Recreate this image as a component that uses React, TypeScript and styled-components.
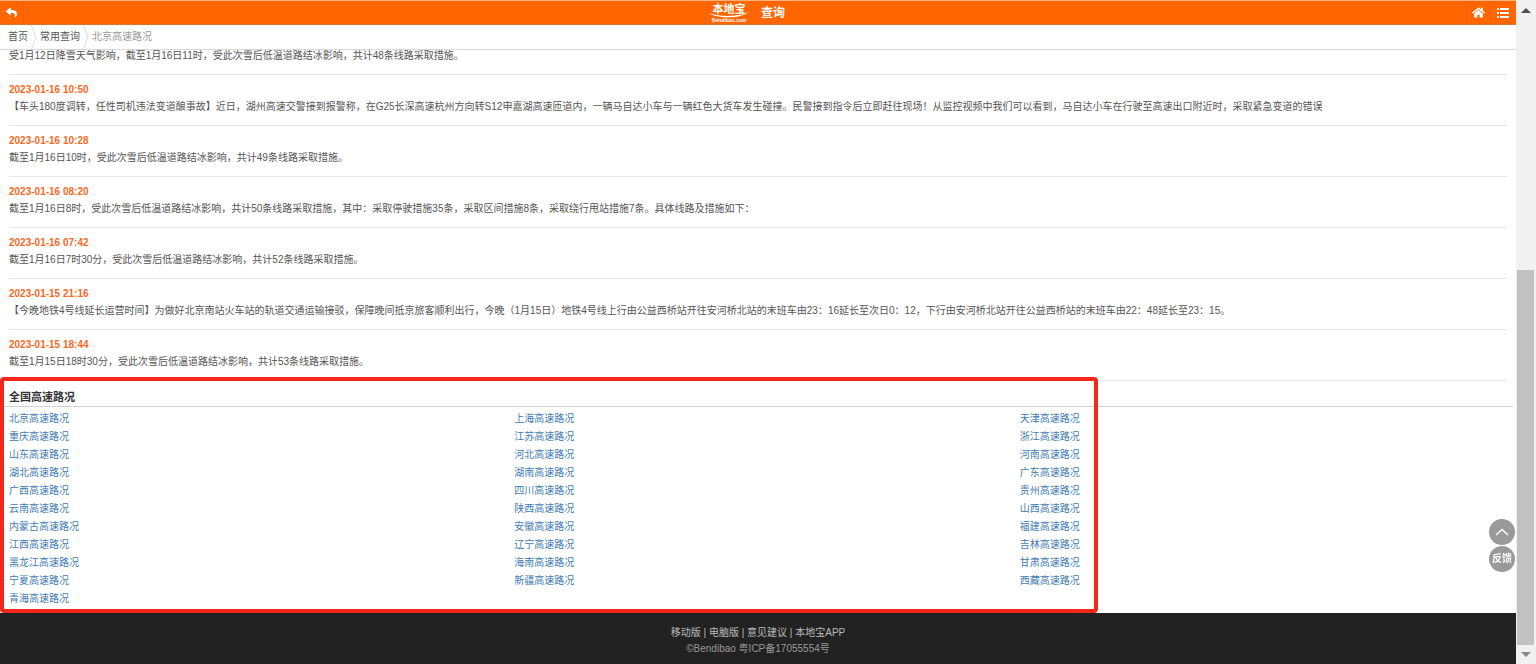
import React from "react";
import styled, { createGlobalStyle } from "styled-components";
import { FaReply, FaHome } from "react-icons/fa";

const GlobalStyle = createGlobalStyle`
  * { box-sizing: border-box; }
  body {
    margin: 0;
    background: #fff;
    color: #555;
    font: 10px/18px "Liberation Sans", "Noto Sans CJK SC", sans-serif;
  }
  a { color: inherit; text-decoration: none; }
  p, h2, ul, ol { margin: 0; padding: 0; font-size: inherit; font-weight: inherit; }
  ul, ol { list-style: none; }
  button {
    border: 0;
    padding: 0;
    font: inherit;
    cursor: pointer;
  }
`;

const Page = styled.div`
  display: flex;
  min-height: 100vh;
`;

const Column = styled.div`
  flex: 1;
  min-width: 0;
  display: flex;
  flex-direction: column;
`;

const Header = styled.header`
  position: fixed;
  z-index: 3;
  top: 0;
  left: 0;
  right: 20px;
  height: 50px;
  background: #fff;
  border-bottom: 1px solid #d8d8d8;
`;

const TitleBar = styled.div`
  height: 25px;
  display: flex;
  align-items: stretch;
  background: #ff6600;
  color: #fff;
  border-top: 1px solid #ffb27a;
  border-bottom: 1px solid #d9772e;
`;

const BarSide = styled.div<{ $end?: boolean }>`
  flex: 1;
  display: flex;
  justify-content: ${(p) => (p.$end ? "flex-end" : "flex-start")};
  padding-right: ${(p) => (p.$end ? "2px" : "0")};
`;

const BarButton = styled.button<{ $end?: boolean }>`
  width: 24px;
  display: flex;
  align-items: center;
  justify-content: center;
  background: none;
  color: #fff;
  border: 0 solid #f06000;
  border-width: ${(p) => (p.$end ? "0 0 0 1px" : "0 1px 0 0")};
`;

const Brand = styled.div`
  display: flex;
  align-items: center;
  gap: 12px;
  margin-right: 20px;
  font-size: 12px;
  font-weight: bold;
`;

const Crumbs = styled.ol`
  height: 24px;
  display: flex;
  align-items: center;
  padding-left: 8px;
`;

const Crumb = styled.li<{ $current?: boolean }>`
  display: flex;
  align-items: center;
  line-height: 24px;
  color: ${(p) => (p.$current ? "#999" : "#555")};
`;

const Chevron = styled.svg`
  margin: 0 3px;
  fill: none;
  stroke: #dedede;
`;

const News = styled.main`
  padding: 47px 9px 0;
`;

const NewsItem = styled.article`
  padding-bottom: 9px;
  border-bottom: 1px solid #e6e6e6;
`;

const NewsTime = styled.time`
  display: block;
  padding-top: 7px;
  line-height: 16px;
  font-weight: bold;
  color: #f56a1f;
`;

const Regions = styled.section`
  position: relative;
  padding-bottom: 5px;
`;

const RegionsTitle = styled.h2`
  margin-right: 3px;
  padding: 7px 9px 0;
  border-bottom: 1px solid #d2d2d2;
  && {
    font-size: 11px;
    font-weight: bold;
  }
  color: #333;
`;

const RegionGrid = styled.ul`
  display: grid;
  grid-template-columns: repeat(3, 1fr);
  && { padding-top: 3px; }
  color: #3f7cb5;
`;

const RegionCell = styled.li`
  padding-left: 9px;
`;

const Highlight = styled.div`
  position: absolute;
  z-index: 1;
  top: -4px;
  bottom: 0;
  left: 0;
  width: 72.4%;
  border: 4px solid #f5271a;
  border-radius: 4px;
  pointer-events: none;
`;

const Footer = styled.footer`
  flex: 1;
  padding: 12px 0 8px;
  background: #222;
  text-align: center;
  line-height: 16px;
  color: #999;
`;

const FooterLinks = styled.nav`
  color: #bbb;
`;

const Floating = styled.div`
  position: fixed;
  z-index: 2;
  right: 21px;
  bottom: 92px;
  display: grid;
  gap: 1px;
`;

const RoundButton = styled.button`
  width: 26px;
  height: 26px;
  display: flex;
  align-items: center;
  justify-content: center;
  border-radius: 50%;
  background: #999;
  color: #fff;
  && { font-weight: bold; }
`;

const Scrollbar = styled.div`
  position: sticky;
  top: 0;
  width: 20px;
  height: 100vh;
  display: flex;
  flex-direction: column;
  align-items: center;
  padding: 8px 0 7px;
  background: #f1f1f1;
`;

const Track = styled.div`
  flex: 1;
  width: 18px;
  margin: 6px 0;
  display: flex;
  flex-direction: column;
  justify-content: flex-end;
`;

const Thumb = styled.div`
  height: 60%;
  width: 17px;
  background: #c1c1c1;
`;

const Arrow = styled.svg<{ $color: string }>`
  fill: ${(p) => p.$color};
`;

const news = [
  { text: "受1月12日降雪天气影响，截至1月16日11时，受此次雪后低温道路结冰影响，共计48条线路采取措施。" },
  {
    time: "2023-01-16 10:50",
    text: "【车头180度调转，任性司机违法变道酿事故】近日，湖州高速交警接到报警称，在G25长深高速杭州方向转S12申嘉湖高速匝道内，一辆马自达小车与一辆红色大货车发生碰撞。民警接到指令后立即赶往现场！从监控视频中我们可以看到，马自达小车在行驶至高速出口附近时，采取紧急变道的错误",
  },
  { time: "2023-01-16 10:28", text: "截至1月16日10时，受此次雪后低温道路结冰影响，共计49条线路采取措施。" },
  {
    time: "2023-01-16 08:20",
    text: "截至1月16日8时，受此次雪后低温道路结冰影响，共计50条线路采取措施，其中：采取停驶措施35条，采取区间措施8条，采取绕行甩站措施7条。具体线路及措施如下：",
  },
  { time: "2023-01-16 07:42", text: "截至1月16日7时30分，受此次雪后低温道路结冰影响，共计52条线路采取措施。" },
  {
    time: "2023-01-15 21:16",
    text: "【今晚地铁4号线延长运营时间】为做好北京南站火车站的轨道交通运输接驳，保障晚间抵京旅客顺利出行，今晚（1月15日）地铁4号线上行由公益西桥站开往安河桥北站的末班车由23：16延长至次日0：12，下行由安河桥北站开往公益西桥站的末班车由22：48延长至23：15。",
  },
  { time: "2023-01-15 18:44", text: "截至1月15日18时30分，受此次雪后低温道路结冰影响，共计53条线路采取措施。" },
];

const regions = [
  "北京", "上海", "天津", "重庆", "江苏", "浙江", "山东", "河北", "河南", "湖北", "湖南",
  "广东", "广西", "四川", "贵州", "云南", "陕西", "山西", "内蒙古", "安徽", "福建", "江西",
  "辽宁", "吉林", "黑龙江", "海南", "甘肃", "宁夏", "新疆", "西藏", "青海",
];

const footerLinks = ["移动版", "电脑版", "意见建议", "本地宝APP"];

function Logo() {
  return (
    <svg width="40" height="22" viewBox="0 0 40 22" fill="#fff" role="img" aria-label="本地宝">
      <text x="20" y="11" fontSize="11" fontWeight="bold" textAnchor="middle">本地宝</text>
      <path d="M0 11 C10 15 30 15 40 10 C32 17 8 17 0 11Z" />
      <text x="20" y="20" fontSize="5" fontWeight="bold" textAnchor="middle">Bendibao.com</text>
    </svg>
  );
}

function CrumbArrow() {
  return (
    <Chevron width="6" height="24" viewBox="0 0 6 24" aria-hidden="true">
      <path d="M0.5 0 L5 12 L0.5 24" />
    </Chevron>
  );
}

export default function App() {
  return (
    <>
      <GlobalStyle />
      <Page>
        <Column>
          <Header>
            <TitleBar>
              <BarSide>
                <BarButton aria-label="返回"><FaReply size={11} /></BarButton>
              </BarSide>
              <Brand>
                <Logo />
                <span>查询</span>
              </Brand>
              <BarSide $end>
                <BarButton $end aria-label="首页"><FaHome size={13} /></BarButton>
                <BarButton $end aria-label="菜单">
                  <svg width="12" height="10" viewBox="0 0 12 10" fill="#fff" aria-hidden="true">
                    <path d="M0 0h2v2H0zM3 0h9v2H3zM0 4h2v2H0zM3 4h9v2H3zM0 8h2v2H0zM3 8h9v2H3z" />
                  </svg>
                </BarButton>
              </BarSide>
            </TitleBar>
            <Crumbs>
              <Crumb><a href="#home">首页</a><CrumbArrow /></Crumb>
              <Crumb><a href="#query">常用查询</a><CrumbArrow /></Crumb>
              <Crumb $current>北京高速路况</Crumb>
            </Crumbs>
          </Header>

          <News>
            {news.map((n) => (
              <NewsItem key={n.text}>
                {n.time && <NewsTime>{n.time}</NewsTime>}
                <p>{n.text}</p>
              </NewsItem>
            ))}
          </News>

          <Regions>
            <RegionsTitle>全国高速路况</RegionsTitle>
            <RegionGrid>
              {regions.map((r) => (
                <RegionCell key={r}><a href={"#" + r}>{r}高速路况</a></RegionCell>
              ))}
            </RegionGrid>
            <Highlight />
          </Regions>

          <Footer>
            <FooterLinks>
              {footerLinks.map((label, i) => (
                <React.Fragment key={label}>
                  {i > 0 && " | "}
                  <a href={"#" + label}>{label}</a>
                </React.Fragment>
              ))}
            </FooterLinks>
            <p>©Bendibao 粤ICP备17055554号</p>
          </Footer>
        </Column>

        <Scrollbar aria-hidden="true">
          <Arrow $color="#505050" width="10" height="6" viewBox="0 0 10 6"><path d="M5 0 L10 5 H0Z" /></Arrow>
          <Track><Thumb /></Track>
          <Arrow $color="#8a8a8a" width="10" height="6" viewBox="0 0 10 6"><path d="M5 6 L10 1 H0Z" /></Arrow>
        </Scrollbar>
      </Page>

      <Floating>
        <RoundButton aria-label="返回顶部">
          <svg width="14" height="8" viewBox="0 0 14 8" fill="none" stroke="#fff" strokeWidth="1.4" aria-hidden="true">
            <path d="M1 7 L7 1.5 L13 7" />
          </svg>
        </RoundButton>
        <RoundButton>反馈</RoundButton>
      </Floating>
    </>
  );
}
